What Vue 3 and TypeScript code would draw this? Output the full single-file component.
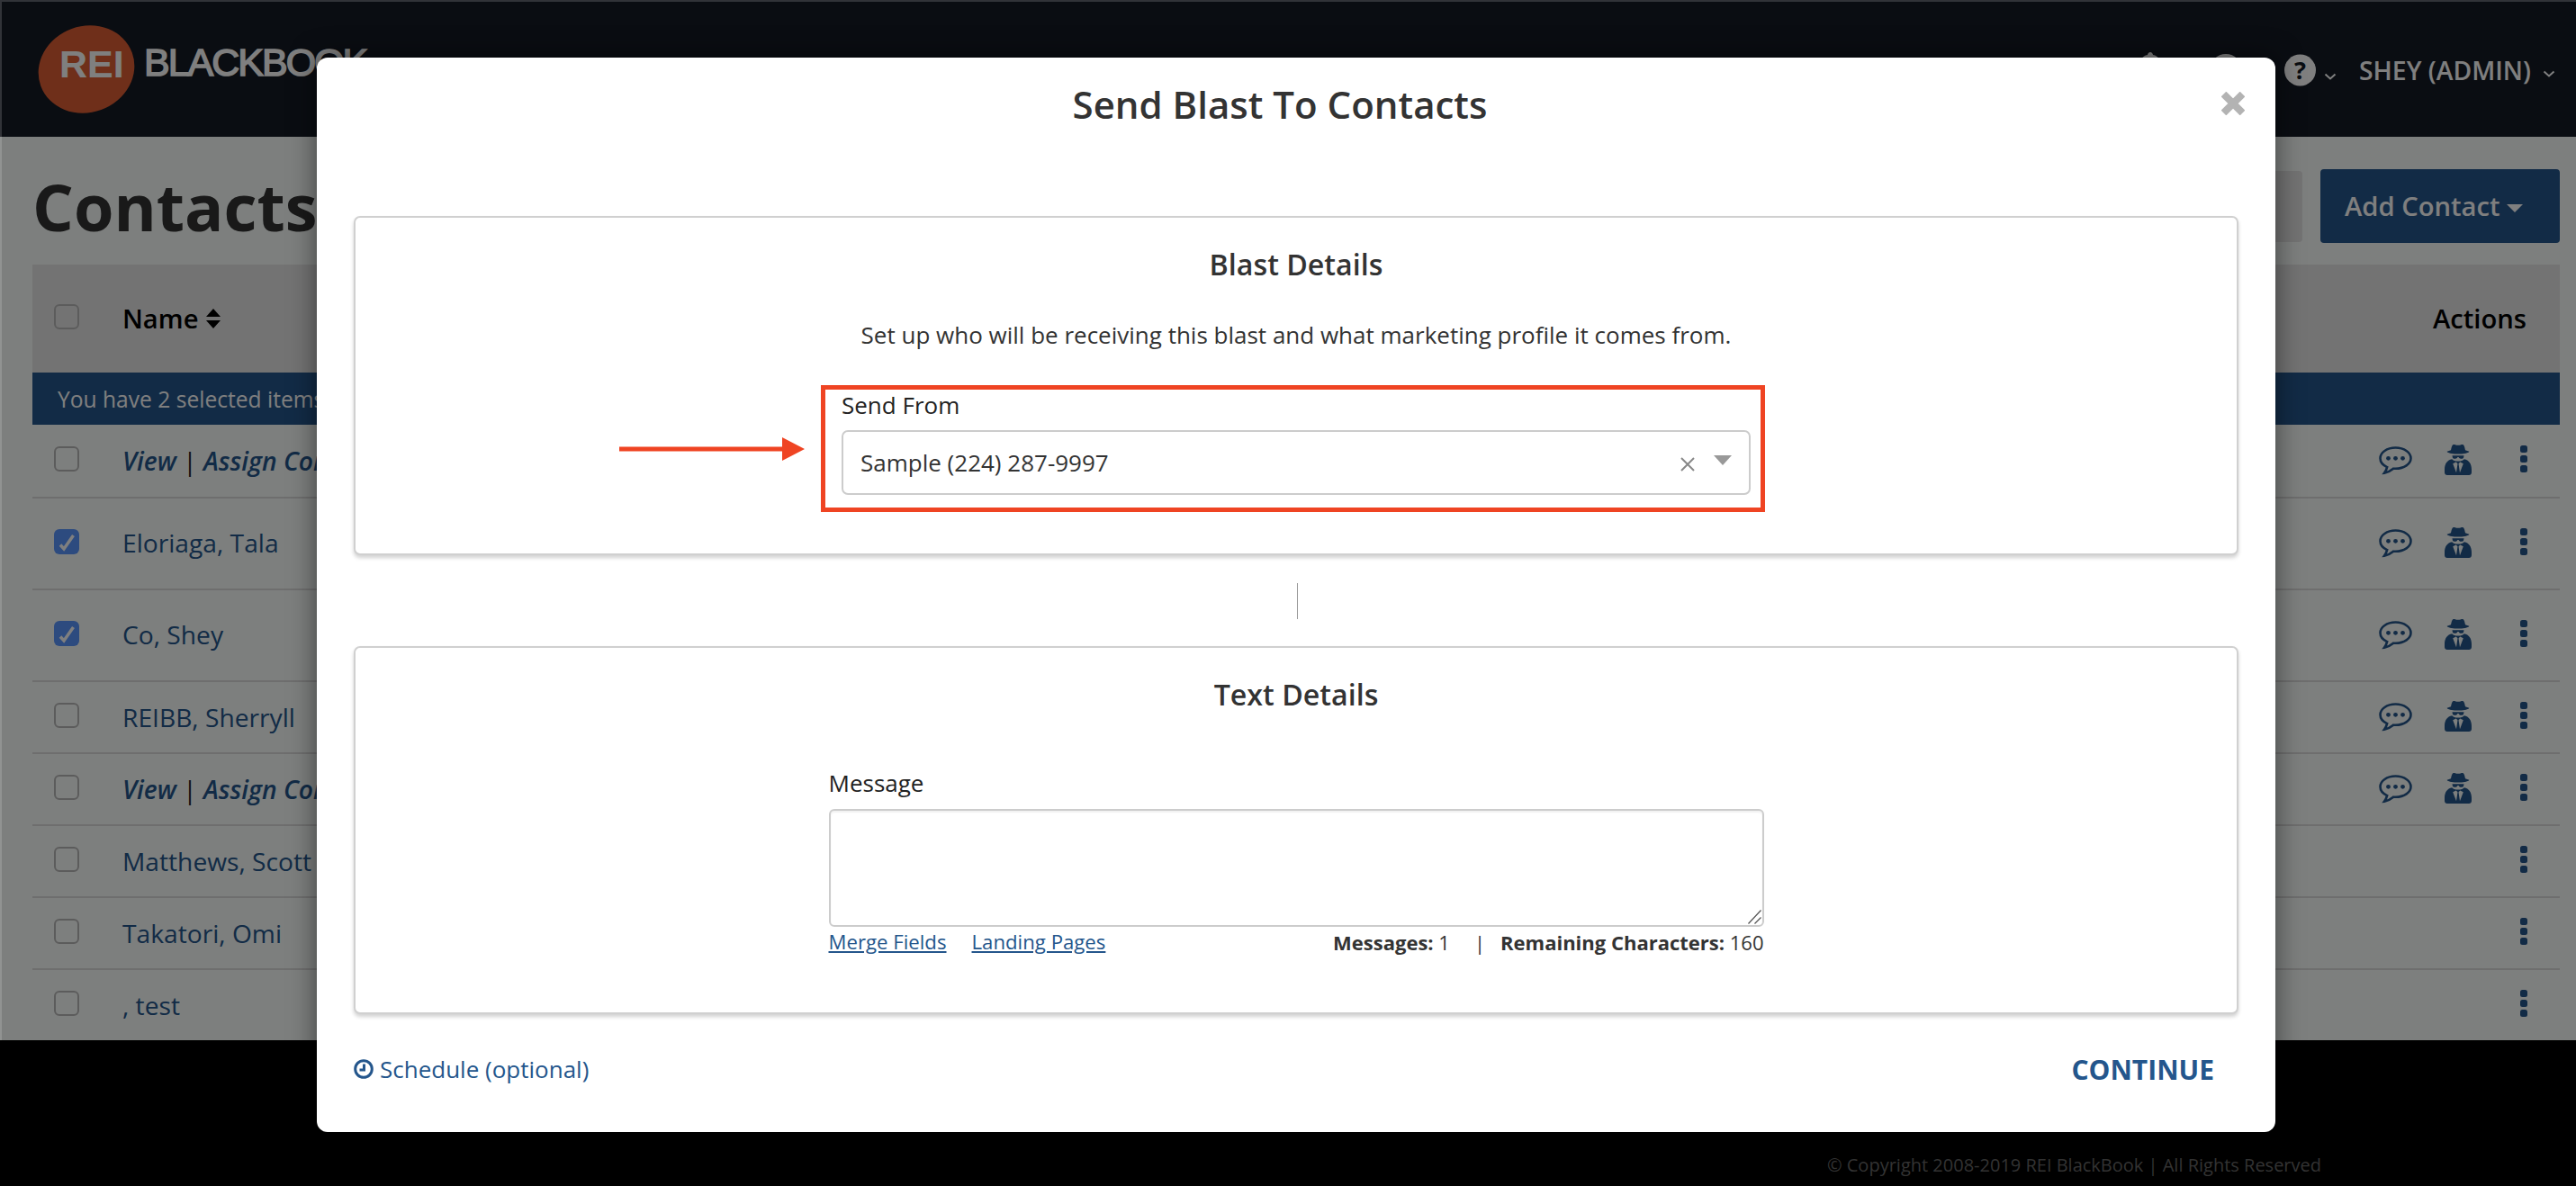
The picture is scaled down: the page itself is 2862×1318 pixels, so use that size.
<script setup lang="ts">
interface Row {
  name: string
  assign?: boolean
  checked?: boolean
  tall?: boolean
  comms?: boolean
}

const rows: Row[] = [
  { name: 'View', assign: true, comms: true },
  { name: 'Eloriaga, Tala', checked: true, tall: true, comms: true },
  { name: 'Co, Shey', checked: true, tall: true, comms: true },
  { name: 'REIBB, Sherryll', comms: true },
  { name: 'View', assign: true, comms: true },
  { name: 'Matthews, Scott' },
  { name: 'Takatori, Omi' },
  { name: ', test' },
]
</script>

<template>
  <div class="page">
    <header class="topbar">
      <div class="brand">
        <svg class="logo" viewBox="0 0 110 100" aria-hidden="true">
          <ellipse cx="55" cy="50" rx="54" ry="48" transform="rotate(-20 55 50)" fill="#de5e34" />
          <text x="25" y="59" class="logo-rei">REI</text>
        </svg>
        <span class="wordmark">BLACKBOOK</span>
      </div>
      <nav class="nav">
        <svg class="bell" viewBox="0 0 36 36" aria-hidden="true">
          <path d="M18 0c1.500 0 3 1.500 3 3 6 1 9 6 9 12v6l4 6H2l4-6v-6c0-6 3-11 9-12 0-1.500 1.500-3 3-3z" />
        </svg>
        <span class="nav-dot"></span>
        <svg class="help" viewBox="0 0 36 36" aria-hidden="true">
          <circle cx="18" cy="18" r="18" fill="currentColor" />
          <text x="18" y="28" text-anchor="middle" class="help-q">?</text>
        </svg>
        <svg class="chev chev-a" viewBox="0 0 14 8" aria-hidden="true">
          <path d="M1.500 1.500 7 6.500l5.500-5" />
        </svg>
        <span class="user">SHEY (ADMIN)</span>
        <svg class="chev chev-b" viewBox="0 0 14 8" aria-hidden="true">
          <path d="M1.500 1.500 7 6.500l5.500-5" />
        </svg>
      </nav>
    </header>

    <main class="main">
      <div class="title-row">
        <h1 class="page-title">Contacts</h1>
        <div class="tools">
          <div class="search"></div>
          <button class="add-btn" type="button">Add Contact<span class="btn-caret"></span></button>
        </div>
      </div>

      <section class="table">
        <div class="thead">
          <span class="check"></span>
          <span class="th-name">Name</span>
          <svg class="sort" viewBox="0 0 16 22" aria-hidden="true">
            <path d="M8 0 16 9H0zM8 22 0 13h16z" />
          </svg>
          <span class="th-actions">Actions</span>
        </div>
        <div class="selection-bar">You have 2 selected items</div>
        <div v-for="(row, i) in rows" :key="i" class="row" :class="{ tall: row.tall }">
          <span class="check" :class="{ checked: row.checked }">
            <svg v-if="row.checked" viewBox="0 0 28 28" aria-hidden="true">
              <path d="M7 17.500l4 4.500L21.500 7" />
            </svg>
          </span>
          <span v-if="row.assign" class="name assign">View <span class="pipe">|</span> Assign Contact</span>
          <span v-else class="name">{{ row.name }}</span>
          <div class="actions">
            <template v-if="row.comms">
              <svg class="chat" viewBox="0 0 37 32" aria-hidden="true">
                <path class="chat-line" d="M18.500 1.500C9 1.500 1.500 6.800 1.500 13.300c0 4.200 3 7.700 7.600 9.800-.5 2.200-1.500 4.400-3 6.500 3.800-.6 7.200-2.600 10-4.900.8.100 1.600.1 2.400.1 9.500 0 17-5.200 17-11.500S28 1.500 18.500 1.500z" />
                <circle cx="10.500" cy="13.300" r="2.400" />
                <circle cx="18.500" cy="13.300" r="2.400" />
                <circle cx="26.500" cy="13.300" r="2.400" />
              </svg>
              <svg class="spy" viewBox="0 0 30 35" aria-hidden="true">
                <path d="M9 1.500c1.600-1.200 2.900.3 6 .3s4.400-1.500 6-.3c1 .8 1.600 4 2 5.700l4.300 1.600c.3.300-.6 1.400-5 2.200-2.200.4-4.600.6-7.300.6s-5.100-.2-7.300-.6c-4.400-.8-5.300-1.900-5-2.200L7 7.200c.4-1.700 1-4.900 2-5.700z" />
                <path class="spy-face" d="M8 12.500c2 .5 4.300.8 7 .8s5-.3 7-.8l.3 2.200c-.5 2.500-2 4.800-7.300 4.800s-6.800-2.300-7.300-4.800z" />
                <path d="M8.500 13.200h13l-.4 2.300c-.3 1-1.600 1.500-3 1.300-1.300-.2-2-.9-2.500-1.900h-1.200c-.5 1-1.200 1.700-2.500 1.900-1.400.2-2.700-.3-3-1.300z" />
                <path d="M8.200 17.300C3 18.300 0 22.500 0 28.800V32c0 1.700 1.300 3 3 3h24c1.700 0 3-1.300 3-3v-3.200c0-6.300-3-10.500-8.200-11.500-1.200 1.400-3.600 2.300-6.800 2.300s-5.600-.9-6.800-2.300z" />
                <path class="spy-gap" d="M12.700 20.500l1.800 1.800-1.500 10-3.800-10zM17.300 20.500l-1.800 1.800 1.500 10 3.800-10z" />
              </svg>
            </template>
            <span class="dots"><i></i><i></i><i></i></span>
          </div>
        </div>
      </section>
    </main>

    <footer class="page-footer">© Copyright 2008-2019 REI BlackBook | All Rights Reserved</footer>

    <div class="overlay">
      <div class="modal">
        <svg class="close" viewBox="0 0 26 26" aria-hidden="true">
          <path d="M2.500 2.500l21 21M23.500 2.500l-21 21" />
        </svg>
        <h2 class="modal-title">Send Blast To Contacts</h2>

        <section class="card card-blast">
          <h3 class="card-title">Blast Details</h3>
          <p class="card-sub">Set up who will be receiving this blast and what marketing profile it comes from.</p>
          <div class="send-field">
            <svg class="arrow" viewBox="0 0 206 26" aria-hidden="true">
              <path d="M0 10.500h181V0l25 13-25 13V15.500H0z" />
            </svg>
            <div class="highlight"></div>
            <label class="label">Send From</label>
            <div class="select">
              <span>Sample (224) 287-9997</span>
              <svg class="clear" viewBox="0 0 18 18" aria-hidden="true">
                <path d="M2 2l14 14M16 2 2 16" />
              </svg>
              <span class="select-caret"></span>
            </div>
          </div>
        </section>

        <div class="divider"></div>

        <section class="card card-text">
          <h3 class="card-title">Text Details</h3>
          <div class="message-field">
            <label class="label">Message</label>
            <div class="message-wrap">
              <textarea class="message" aria-label="Message"></textarea>
              <svg class="grip" viewBox="0 0 15 16" aria-hidden="true">
                <path d="M14.500.5.500 15.500M14.500 8.500l-7 7" />
              </svg>
            </div>
            <div class="under">
              <div class="links">
                <a class="link">Merge Fields</a>
                <a class="link">Landing Pages</a>
              </div>
              <div class="counts">
                <b>Messages:</b> 1<span class="count-sep">|</span><b>Remaining Characters:</b> 160
              </div>
            </div>
          </div>
        </section>

        <div class="modal-footer">
          <a class="schedule">
            <svg class="clock" viewBox="0 0 22 22" aria-hidden="true">
              <circle cx="11" cy="11" r="9.300" />
              <path d="M11.500 5.500v6.500H6.500" />
            </svg>
            Schedule (optional)
          </a>
          <a class="continue">CONTINUE</a>
        </div>
      </div>
    </div>
    <div class="window-edge"></div>
  </div>
</template>

<style>
html,
body {
  margin: 0;
  background: #000;
}
</style>

<style scoped>
* {
  box-sizing: border-box;
}

.page {
  position: relative;
  display: flex;
  flex-direction: column;
  width: 2862px;
  height: 1318px;
  overflow: hidden;
  background: #fafefc;
  font-family: "Open Sans", "Liberation Sans", sans-serif;
  color: #333;
}

.window-edge {
  position: absolute;
  top: 0;
  left: 0;
  width: 100%;
  height: 1156px;
  border-top: 2px solid rgba(255, 255, 255, 0.16);
  border-left: 2px solid rgba(255, 255, 255, 0.16);
  pointer-events: none;
}

.topbar {
  display: flex;
  align-items: flex-start;
  justify-content: space-between;
  flex: none;
  height: 152px;
  background: #141a24;
  color: #fff;
}

.brand {
  display: flex;
  align-items: center;
  padding: 27px 0 0 41px;
}

.logo {
  width: 110px;
  height: 100px;
}

.logo-rei {
  font: 700 43px "Liberation Sans", sans-serif;
  fill: #fff;
}

.wordmark {
  margin: -16px 0 0 9px;
  font: 400 43px/1 "Liberation Sans", sans-serif;
  letter-spacing: -2px;
  -webkit-text-stroke: 1.5px #fff;
}

.nav {
  display: flex;
  align-items: center;
  height: 36px;
  margin: 60px 23px 0 0;
}

.bell {
  width: 36px;
  height: 36px;
  margin: -4px 48px 0 0;
  fill: #fff;
}

.nav-dot {
  width: 36px;
  height: 36px;
  margin-right: 47px;
  border-radius: 50%;
  background: #fff;
}

.help {
  width: 35px;
  height: 36px;
  color: #fff;
}

.help-q {
  font: 700 28px "Open Sans", sans-serif;
  fill: #141a24;
}

.chev {
  width: 14px;
  height: 8px;
  fill: none;
  stroke: #fff;
  stroke-width: 2;
}

.chev-a {
  margin: 14px 25px 0 9px;
}

.chev-b {
  margin: 8px 0 0 13px;
}

.user {
  font-size: 28.300px;
  font-weight: 600;
  line-height: 36px;
}

.main {
  flex: 1;
  padding: 36px 18px 0 36px;
}

.title-row {
  display: flex;
  align-items: center;
  justify-content: space-between;
  height: 82px;
  margin-bottom: 24px;
}

.page-title {
  margin: 0;
  font-size: 72px;
  font-weight: 700;
  line-height: 82px;
  color: #333;
}

.tools {
  display: flex;
  align-items: center;
  gap: 20px;
}

.search {
  width: 300px;
  height: 79px;
  border-radius: 4px;
  background: #e6e6e6;
}

.add-btn {
  display: flex;
  align-items: center;
  gap: 7px;
  width: 266px;
  height: 82px;
  padding: 0 0 0 27px;
  border: 0;
  border-radius: 4px;
  background: #24568c;
  color: #fff;
  font: 600 29.200px "Open Sans", sans-serif;
}

.btn-caret {
  width: 0;
  height: 0;
  margin-top: 4px;
  border: 9px solid transparent;
  border-top-color: #fff;
  border-bottom: 0;
}

.thead {
  display: flex;
  align-items: center;
  height: 120px;
  padding: 0 37px 0 24px;
  background: #e6e6e6;
  color: #000;
  font-size: 29.200px;
  font-weight: 600;
}

.thead .check {
  margin-top: -4px;
}

.th-name {
  margin-left: 48px;
}

.sort {
  width: 16px;
  height: 22px;
  margin-left: 9px;
  fill: #000;
}

.th-actions {
  margin-left: auto;
}

.selection-bar {
  display: flex;
  align-items: center;
  height: 58px;
  padding-left: 28px;
  background: #24568c;
  color: #fff;
  font-size: 24.600px;
}

.row {
  display: flex;
  align-items: center;
  height: 80px;
  padding: 0 36px 0 24px;
  border-bottom: 2px solid #dcdddc;
}

.row:nth-child(3) {
  height: 82px;
}

.row.tall {
  height: 102px;
}

.row:last-child {
  height: 78px;
  border-bottom: 0;
}

.check {
  display: block;
  flex: none;
  width: 28px;
  height: 28px;
  margin-top: -4px;
  border: 2px solid #b8b8b8;
  border-radius: 6px;
}

.check.checked {
  border: 0;
  background: #5a96ff;
}

.check svg {
  display: block;
  width: 28px;
  height: 28px;
  fill: none;
  stroke: #fff;
  stroke-width: 3.500;
}

.name {
  margin-left: 48px;
  color: #24568c;
  font-size: 28.200px;
  white-space: nowrap;
}

.tall .name {
  margin-top: -3px;
}

.assign {
  font-style: italic;
  font-weight: 600;
}

.pipe {
  color: #222;
  font-style: normal;
  font-weight: 400;
}

.actions {
  display: flex;
  align-items: center;
  justify-content: flex-end;
  margin: -4px 0 0 auto;
  color: #24568c;
}

.chat {
  width: 37px;
  height: 32px;
  margin-top: 4px;
  fill: #24568c;
}

.chat-line {
  fill: none;
  stroke: #24568c;
  stroke-width: 2.600;
}

.spy {
  width: 30px;
  height: 35px;
  margin: 0 54px 0 36px;
  fill: #24568c;
}

.spy-gap,
.spy-face {
  fill: #fafefc;
}

.dots {
  display: flex;
  flex-direction: column;
  gap: 3px;
  width: 8px;
}

.dots i {
  display: block;
  width: 8px;
  height: 8px;
  border-radius: 2.500px;
  background: #24568c;
}

.page-footer {
  display: flex;
  flex: none;
  align-items: flex-end;
  justify-content: flex-end;
  height: 162px;
  padding: 0 283px 8px 0;
  background: #000;
  color: #666;
  font-size: 20px;
  line-height: 30px;
}

.overlay {
  position: absolute;
  inset: 0;
  background: rgba(0, 0, 0, 0.5);
}

.modal {
  position: absolute;
  top: 64px;
  left: 352px;
  width: 2176px;
  height: 1194px;
  padding: 0 41px;
  border-radius: 12px;
  background: #fff;
  box-shadow: 0 0 30px rgba(0, 0, 0, 0.5);
}

.close {
  position: absolute;
  top: 38px;
  right: 34px;
  width: 26px;
  height: 26px;
  fill: none;
  stroke: #b3b3b3;
  stroke-width: 8;
}

.modal-title {
  height: 176px;
  margin: 0;
  padding: 30px 36px 0 0;
  color: #333;
  font-size: 42px;
  font-weight: 600;
  line-height: 44px;
  text-align: center;
}

.card {
  border: 2px solid #d0d0d0;
  border-radius: 7px;
  background: #fff;
  box-shadow: 0 3px 4px rgba(0, 0, 0, 0.18);
  text-align: center;
}

.card-blast {
  height: 377px;
  padding-top: 30px;
}

.card-text {
  height: 409px;
  padding-top: 30px;
}

.card-title {
  margin: 0;
  color: #333;
  font-size: 32.200px;
  font-weight: 600;
  line-height: 44px;
}

.card-sub {
  margin: 36px 0 36px;
  color: #333;
  font-size: 26px;
  line-height: 40px;
}

.send-field {
  position: relative;
  width: 1010px;
  height: 141px;
  margin: 0 auto;
  padding-top: 4px;
  text-align: left;
}

.highlight {
  position: absolute;
  inset: 0 -16px 0 -23px;
  border: 5px solid #ef4423;
  pointer-events: none;
}

.arrow {
  position: absolute;
  top: 58px;
  left: -247px;
  width: 206px;
  height: 26px;
  fill: #ef4423;
}

.label {
  display: block;
  color: #222;
  font-size: 26px;
  line-height: 36px;
}

.select {
  display: flex;
  align-items: center;
  position: relative;
  height: 72px;
  margin-top: 10px;
  padding-left: 19px;
  border: 2px solid #ccc;
  border-radius: 7px;
  color: #333;
  font-size: 26px;
}

.clear {
  position: absolute;
  top: 27px;
  right: 59px;
  width: 18px;
  height: 18px;
  fill: none;
  stroke: #888;
  stroke-width: 2;
}

.select-caret {
  position: absolute;
  top: 26px;
  right: 19px;
  width: 0;
  height: 0;
  border-top: 11px solid #999;
  border-right: 10.500px solid transparent;
  border-left: 10.500px solid transparent;
}

.divider {
  width: 1px;
  height: 40px;
  margin: 31px 0 30px 1048px;
  background: #999;
}

.message-field {
  width: 1039px;
  margin: 58px auto 0;
  text-align: left;
}

.message-wrap {
  position: relative;
  margin-top: 11px;
}

.message {
  display: block;
  width: 100%;
  height: 131px;
  padding: 10px;
  border: 2px solid #ccc;
  border-radius: 6px;
  outline: none;
  background: #fff;
  box-shadow: inset 0 2px 2px rgba(0, 0, 0, 0.06);
  resize: none;
}

.grip {
  position: absolute;
  right: 3px;
  bottom: 3px;
  width: 15px;
  height: 16px;
  fill: none;
  stroke: #555;
  stroke-width: 1.300;
}

.under {
  display: flex;
  align-items: center;
  justify-content: space-between;
  height: 30px;
  margin-top: 2px;
  font-size: 22.200px;
  line-height: 30px;
}

.links {
  display: flex;
  gap: 28px;
}

.link {
  color: #24568c;
  text-decoration: underline;
}

.counts {
  color: #333;
  font-size: 22px;
}

.counts b {
  font-weight: 700;
}

.count-sep {
  margin: 0 17px 0 27px;
}

.modal-footer {
  display: flex;
  align-items: center;
  justify-content: space-between;
  height: 40px;
  margin-top: 41px;
  padding-right: 27px;
}

.schedule {
  display: flex;
  align-items: center;
  gap: 7px;
  color: #24568c;
  font-size: 26px;
}

.clock {
  width: 22px;
  height: 22px;
  fill: none;
  stroke: #24568c;
  stroke-width: 3;
}

.continue {
  color: #24568c;
  font-size: 30px;
  font-weight: 700;
}
</style>
